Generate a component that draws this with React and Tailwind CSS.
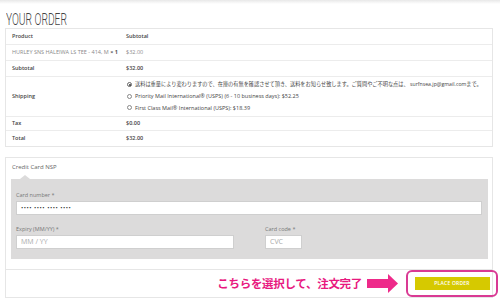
export default function App() {
  const font = { fontFamily: '"Open Sans", "Noto Sans CJK JP", sans-serif' };
  return (
    <div className="relative w-[500px] h-[305px] bg-white overflow-hidden" style={font}>
      <div className="h-[4px] bg-gradient-to-b from-[#e8e8e8] to-white" />
      <div className="pl-[6px] pt-[3px] h-[24px]">
        <span className="inline-block origin-left scale-x-[0.6] text-[17px] leading-[19px] text-[#444] font-light whitespace-nowrap" style={{ fontFamily: 'Roboto, sans-serif' }}>
          YOUR ORDER
        </span>
      </div>
      <div className="ml-[5px] w-[488px] border border-[#e6e6e6] text-[5.5px] text-[#444]">
        <div className="grid grid-cols-[120px_1fr] h-[16px] items-center border-b border-[#ececec] font-semibold">
          <div className="pl-[6px]">Product</div>
          <div>Subtotal</div>
        </div>
        <div className="grid grid-cols-[120px_1fr] h-[16px] items-center border-b border-[#ececec] text-[#8a8a8a]">
          <div className="pl-[6px] whitespace-nowrap">HURLEY SNS HALEIWA LS TEE - 414, M <span className="font-bold text-[#555]">× 1</span></div>
          <div>$32.00</div>
        </div>
        <div className="grid grid-cols-[120px_1fr] h-[16px] items-center border-b border-[#ececec] font-semibold">
          <div className="pl-[6px]">Subtotal</div>
          <div>$32.00</div>
        </div>
        <div className="grid grid-cols-[120px_1fr] h-[40px] items-center border-b border-[#ececec]">
          <div className="pl-[6px] font-semibold">Shipping</div>
          <div className="flex flex-col gap-[3.3px] pl-[1px]">
            <div className="flex items-center gap-[3px] whitespace-nowrap">
              <span className="w-[5px] h-[5px] rounded-full border border-[#666] flex items-center justify-center"><span className="w-[2px] h-[2px] rounded-full bg-[#333]" /></span>
              <span className="text-[5.2px]">送料は重量により変わりますので、在庫の有無を確認させて頂き、送料をお知らせ致します。ご質問やご不明な点は、 surfnsea.jp@gmail.comまで。</span>
            </div>
            <div className="flex items-center gap-[3px] whitespace-nowrap">
              <span className="w-[5px] h-[5px] rounded-full border border-[#888]" />
              <span>Priority Mail International® (USPS) (6 - 10 business days): $52.25</span>
            </div>
            <div className="flex items-center gap-[3px] whitespace-nowrap">
              <span className="w-[5px] h-[5px] rounded-full border border-[#888]" />
              <span>First Class Mail® International (USPS): $18.39</span>
            </div>
          </div>
        </div>
        <div className="grid grid-cols-[120px_1fr] h-[14px] items-center border-b border-[#ececec] font-semibold">
          <div className="pl-[6px]">Tax</div>
          <div>$0.00</div>
        </div>
        <div className="grid grid-cols-[120px_1fr] h-[15px] items-center font-semibold">
          <div className="pl-[6px]">Total</div>
          <div>$32.00</div>
        </div>
      </div>

      <div className="ml-[5px] mt-[10px] w-[488px] h-[141px] border border-[#e6e6e6] flex flex-col">
        <div className="h-[21px] pl-[6px] pt-[5px] text-[6px] text-[#666]">Credit Card NSP</div>
        <div className="relative ml-[5px] mr-[4px] h-[80px] bg-[#dcdbdb] px-[5px] pt-[12px] text-[5.5px] text-[#777]">
          <div className="absolute -top-[4px] left-[9px] w-0 h-0 border-l-[5px] border-r-[5px] border-b-[4px] border-l-transparent border-r-transparent border-b-[#dcdbdb]" />
          <div className="h-[10px]">Card number *</div>
          <div className="h-[14px] mr-[1px] bg-white border border-[#cfcfcf] flex items-center pl-[4px] text-[#333] text-[6px] tracking-[0.5px]">•••• •••• •••• ••••</div>
          <div className="mt-[10px] flex">
            <div className="w-[218px]">
              <div className="h-[10px]">Expiry (MM/YY) *</div>
              <div className="h-[14px] bg-white border border-[#cfcfcf] flex items-center pl-[4px] text-[#aaa] text-[7px]">MM / YY</div>
            </div>
            <div className="ml-[31px] w-[37px]">
              <div className="h-[10px]">Card code *</div>
              <div className="h-[14px] bg-white border border-[#cfcfcf] flex items-center pl-[4px] text-[#aaa] text-[7px]">CVC</div>
            </div>
          </div>
        </div>
        <div className="h-[11px] border-b border-[#e6e6e6]" />
        <div className="flex-1 flex items-center justify-end">
          <span className="text-[#e8197f] font-bold text-[11.5px] tracking-[-0.3px]" style={{ fontFamily: '"Noto Sans CJK JP", sans-serif' }}>こちらを選択して、注文完了</span>
          <svg className="ml-[5px]" width="31" height="20" viewBox="0 0 31 20">
            <rect x="0" y="5" width="22" height="9" fill="#ee2a8a" />
            <polygon points="21,0 31,9.5 21,19" fill="#ee2a8a" />
          </svg>
          <div className="ml-[8px] -mr-[6px] w-[92px] h-[27px] border-2 border-[#d93a94] rounded-[6px] flex items-center justify-center">
            <div className="w-[75px] h-[13px] bg-[#d6c900] flex items-center justify-center text-white text-[5px] font-semibold tracking-[0.2px]">PLACE ORDER</div>
          </div>
        </div>
      </div>
    </div>
  );
}
